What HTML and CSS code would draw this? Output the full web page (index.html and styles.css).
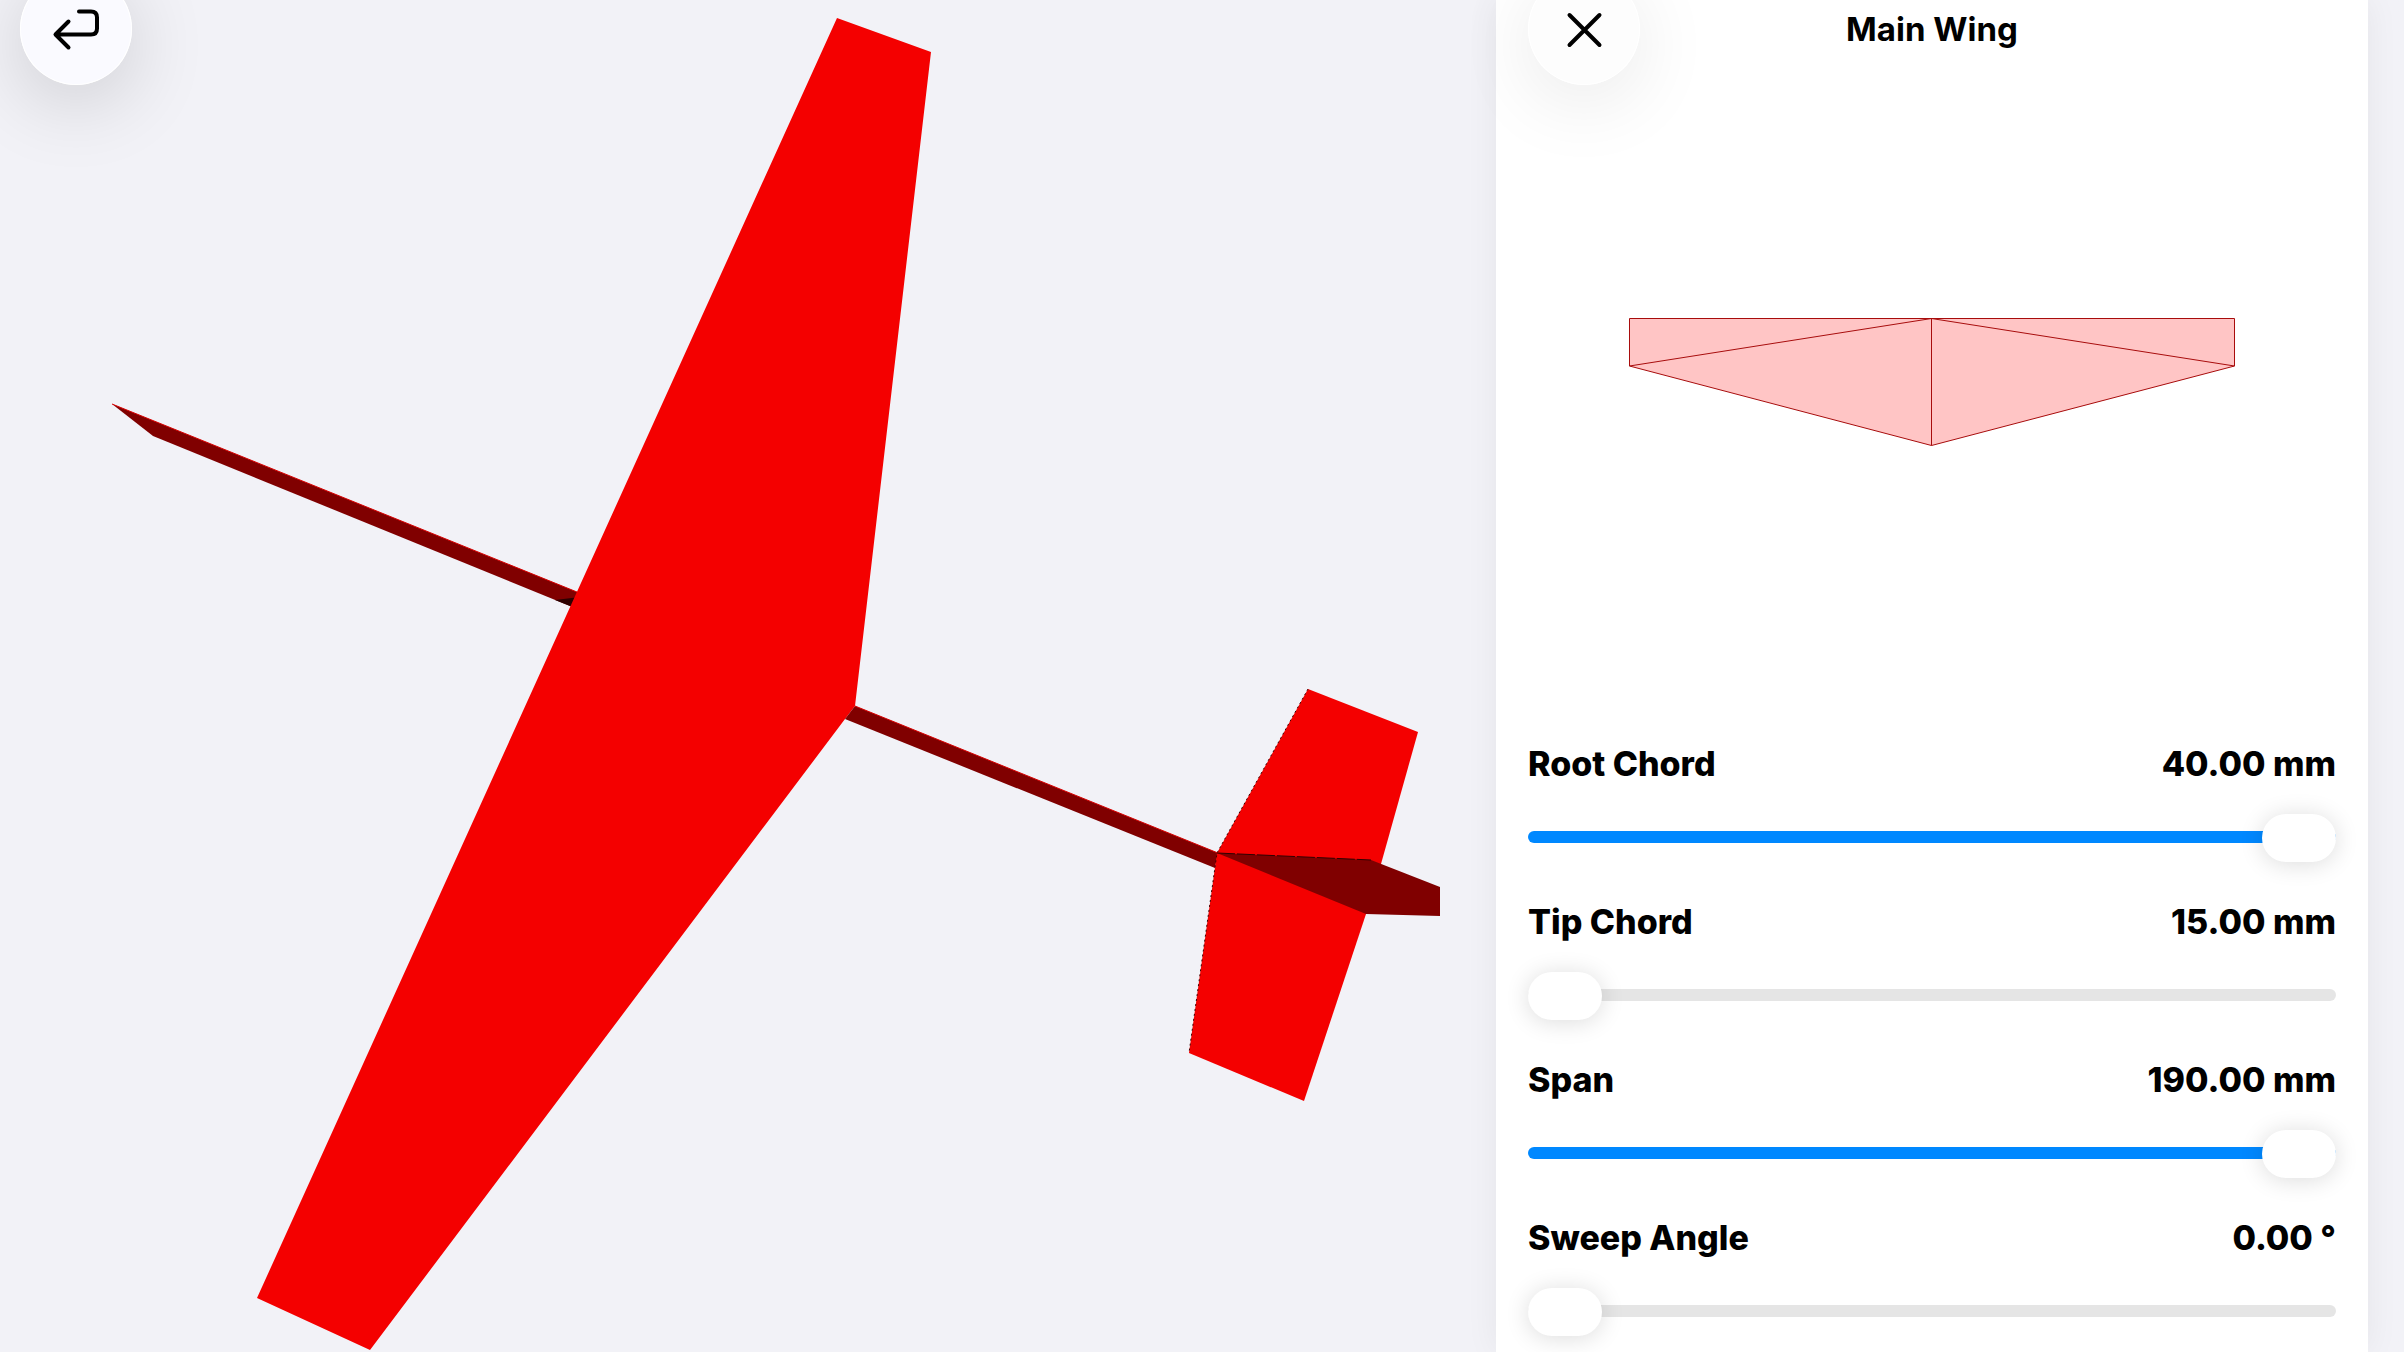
FILE: index.html
```html
<!DOCTYPE html>
<html lang="en">
<head>
<meta charset="utf-8">
<meta name="viewport" content="width=device-width, initial-scale=1">
<title>Main Wing</title>
<link rel="stylesheet" href="styles.css">
</head>
<body>
<div class="editor">
  <main class="stage">
    <svg class="glider" viewBox="0 0 1496 1352" preserveAspectRatio="xMidYMin meet" role="img" aria-label="Glider model">
      <!-- fuselage, nose section -->
      <path class="dark" d="M112 404 577 592 590 614 570 606 153 436Z"/>
      <path class="shadow" d="M555 600 580 597 580 610Z"/>
      <path class="lit-edge" d="M112 404 577 592"/>
      <!-- main wing -->
      <path class="red" d="M837 18 931 52 855 706 845 719 370 1350 257 1298Z"/>
      <!-- tail boom -->
      <path class="dark" d="M855 706 1218 853 1215 868 845 719Z"/>
      <path class="lit-edge" d="M855 706 1218 853"/>
      <!-- horizontal and vertical stabilisers -->
      <path class="red" d="M1308 689 1418 732 1381 864 1366 914 1304 1101 1189 1053 1217 853Z"/>
      <path class="fine-edge" d="M1308 689 1217 853 1189 1053"/>
      <path class="dark" d="M1217 853 1371 860 1440 887 1440 916 1366 914Z"/>
      <path class="fin-edge" d="M1217 853 1371 860"/>
    </svg>
    <button class="round-button back" type="button" aria-label="Back">
      <svg viewBox="0 0 112 112" aria-hidden="true"><path d="M59 38.500H71Q77 38.500 77 44.500V55.500Q77 61.500 71 61.500H36M48.500 48.500 35.500 61.500 48.500 74.500"/></svg>
    </button>
  </main>

  <section class="panel" aria-labelledby="panel-title">
    <header class="panel-header">
      <button class="round-button close" type="button" aria-label="Close">
        <svg viewBox="0 0 112 112" aria-hidden="true"><path d="M41.500 42 71.500 72M71.500 42 41.500 72"/></svg>
      </button>
      <h1 class="title" id="panel-title">Main Wing</h1>
    </header>

    <svg class="planform" viewBox="0 0 808 657" role="img" aria-label="Wing planform">
      <path class="plan-fill" d="M101.500 233.500H706.500V281L403.500 360.500 101.500 281Z"/>
      <path class="plan-line" d="M101.500 281V233.500H706.500V281M403.500 233.500V360.500"/>
      <path class="plan-line" d="M101.500 281 403.500 233.500 706.500 281M101.500 281 403.500 360.500 706.500 281"/>
    </svg>

    <form class="controls">
      <div class="control">
        <div class="control-text"><label for="root">Root Chord</label><output for="root">40.00 mm</output></div>
        <input class="slider" id="root" type="range" min="15" max="40" value="40" style="--fill: 100%">
      </div>
      <div class="control">
        <div class="control-text"><label for="tip">Tip Chord</label><output for="tip">15.00 mm</output></div>
        <input class="slider" id="tip" type="range" min="15" max="40" value="15" style="--fill: 0%">
      </div>
      <div class="control">
        <div class="control-text"><label for="span">Span</label><output for="span">190.00 mm</output></div>
        <input class="slider" id="span" type="range" min="100" max="190" value="190" style="--fill: 100%">
      </div>
      <div class="control">
        <div class="control-text"><label for="sweep">Sweep Angle</label><output for="sweep">0.00 °</output></div>
        <input class="slider" id="sweep" type="range" min="0" max="45" value="0" style="--fill: 0%">
      </div>
    </form>
  </section>
</div>
</body>
</html>
```
FILE: styles.css
```css
* {
  box-sizing: border-box;
}

body {
  margin: 0;
  background: #f2f2f7;
  color: #000;
  font-family: Inter, "Liberation Sans", sans-serif;
  font-size: 34px;
  line-height: 44px;
}

.editor {
  display: grid;
  grid-template-columns: minmax(0, 1496fr) minmax(0, 872fr);
  min-height: 100vh;
  padding-right: 36px;
  overflow: hidden;
}

.stage {
  position: relative;
}

.glider {
  display: block;
  width: 100%;
}

.red {
  fill: #f40000;
}

.dark {
  fill: #800000;
}

.shadow {
  fill: #2c0000;
}

.lit-edge {
  fill: none;
  stroke: #d80000;
  stroke-width: 1;
}

.fine-edge {
  fill: none;
  stroke: #400000;
  stroke-width: 1;
  stroke-dasharray: 2 3;
}

.fin-edge {
  fill: none;
  stroke: #300000;
  stroke-width: 1;
  stroke-dasharray: 18 2;
}

.round-button {
  width: 112px;
  height: 112px;
  padding: 0;
  border: 0;
  border-radius: 50%;
}

.round-button svg {
  display: block;
  width: 112px;
  height: 112px;
  fill: none;
  stroke: #000;
  stroke-width: 4;
  stroke-linecap: round;
  stroke-linejoin: round;
}

.back {
  position: absolute;
  top: -27px;
  left: 20px;
  background: #fafaff;
  box-shadow: inset 0 0 0 1px #fff, 0 16px 80px rgba(0, 0, 0, 0.16);
}

.close {
  background: #fdfdfd;
  box-shadow: inset 0 0 0 1px #fff, 0 16px 80px rgba(0, 0, 0, 0.09);
}

.panel {
  padding: 0 32px;
  background: #fff;
  box-shadow: 0 0 32px rgba(0, 0, 0, 0.06);
}

.panel-header {
  display: grid;
  grid-template-columns: 112px 1fr 112px;
  align-items: center;
  margin-top: -27px;
}

.title {
  margin: 0;
  font-size: 33px;
  font-weight: 700;
  text-align: center;
}

.planform {
  display: block;
  width: 100%;
}

.plan-fill {
  fill: #ffc5c5;
}

.plan-line {
  fill: none;
  stroke: #a80c0c;
  stroke-width: 1;
}

.controls {
  display: grid;
  gap: 40px;
}

.control {
  display: grid;
  gap: 28px;
}

.control-text {
  display: flex;
  justify-content: space-between;
  font-weight: 800;
}

.slider {
  appearance: none;
  width: 100%;
  height: 46px;
  margin: 0;
  background: none;
}

.slider::-webkit-slider-runnable-track {
  height: 12px;
  border-radius: 6px;
  background: linear-gradient(to right, #08f var(--fill), #e5e5e5 var(--fill));
}

.slider::-webkit-slider-thumb {
  appearance: none;
  width: 74px;
  height: 48px;
  margin-top: -17px;
  border-radius: 24px;
  background: #fff;
  box-shadow: 0 2px 24px rgba(0, 0, 0, 0.14);
}
```
